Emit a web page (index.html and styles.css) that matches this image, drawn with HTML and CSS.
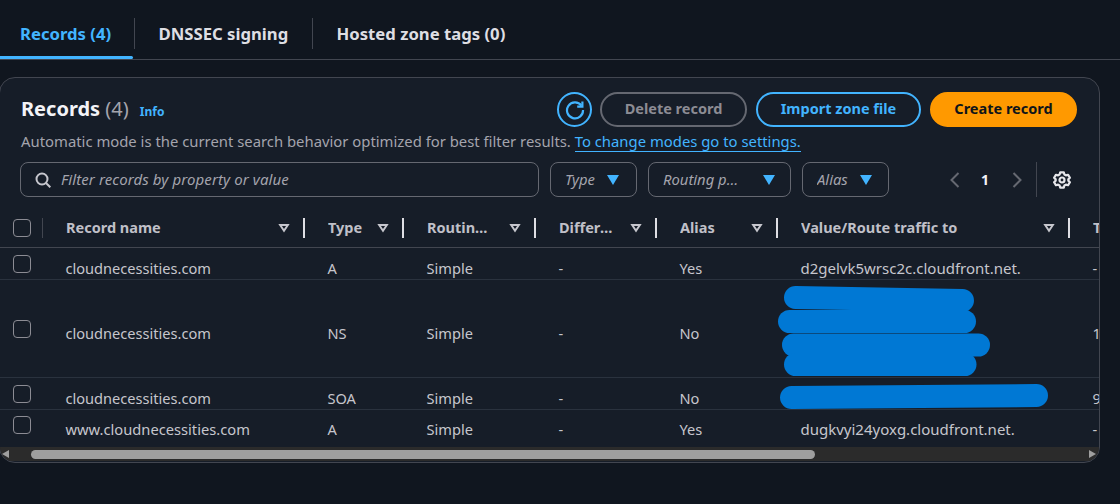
FILE: index.html
```html
<!DOCTYPE html>
<html lang="en">
<head>
<meta charset="utf-8">
<title>Records</title>
<link rel="stylesheet" href="styles.css">
</head>
<body>
<nav class="tabs">
  <a class="tab tab-active">Records (4)</a>
  <a class="tab tab-dns">DNSSEC signing</a>
  <a class="tab tab-tags">Hosted zone tags (0)</a>
</nav>
<section class="card">
  <header class="head">
    <div class="title-row">
      <h2 class="title">Records <span class="count">(4)</span></h2>
      <a class="info">Info</a>
      <div class="actions">
        <button class="btn btn-icon" aria-label="Refresh">
          <svg width="20" height="20" viewBox="0 0 20 20" fill="none" stroke="currentColor" stroke-width="2.2"><path d="M16.4 5.6A8 8 0 1 0 18 10"/><path d="M17.4 1.4v5.2h-5.2"/></svg>
        </button>
        <button class="btn btn-disabled">Delete record</button>
        <button class="btn btn-normal">Import zone file</button>
        <button class="btn btn-primary">Create record</button>
      </div>
    </div>
    <p class="desc">Automatic mode is the current search behavior optimized for best filter results. <a class="link">To change modes go to settings.</a></p>
    <div class="filters">
      <div class="search">
        <svg width="16" height="16" viewBox="0 0 16 16" fill="none" stroke="currentColor" stroke-width="2"><circle cx="7" cy="7" r="5.5"/><path d="m11 11 4.3 4.3"/></svg>
        <span>Filter records by property or value</span>
      </div>
      <div class="select sel-type"><span class="sel-label">Type</span><i class="caret"></i></div>
      <div class="select sel-routing"><span class="sel-label">Routing policy</span><i class="caret"></i></div>
      <div class="select sel-alias"><span class="sel-label">Alias</span><i class="caret"></i></div>
      <div class="pager">
        <svg class="chev chev-prev" width="10" height="16" viewBox="0 0 10 16" fill="none" stroke="currentColor" stroke-width="2"><path d="M8.5 1 1.5 8l7 7"/></svg>
        <span class="page">1</span>
        <svg class="chev chev-next" width="10" height="16" viewBox="0 0 10 16" fill="none" stroke="currentColor" stroke-width="2"><path d="m1.5 1 7 7-7 7"/></svg>
        <span class="pager-sep"></span>
        <svg class="gear" width="18" height="18" viewBox="0 0 18 18" fill="none" stroke="currentColor" stroke-width="2.2" stroke-linejoin="round"><circle cx="9" cy="9" r="2.5"/><path d="M7.2 1.4h3.6l.6 2.1 1.5.9 2.2-.6 1.8 3-1.6 1.6v1.2l1.6 1.6-1.8 3-2.2-.6-1.5.9-.6 2.1H7.2l-.6-2.1-1.5-.9-2.2.6-1.8-3 1.6-1.6V8.4L1.1 6.8l1.8-3 2.2.6 1.5-.9z"/></svg>
      </div>
    </div>
  </header>
  <div class="table">
    <div class="row row-head">
      <div class="th th-check"><i class="check"></i></div>
      <div class="th"><span class="th-label">Record name</span><i class="sort"></i></div>
      <div class="th"><span class="th-label">Type</span><i class="sort"></i></div>
      <div class="th"><span class="th-label">Routing policy</span><i class="sort"></i></div>
      <div class="th"><span class="th-label">Differentiator</span><i class="sort"></i></div>
      <div class="th"><span class="th-label">Alias</span><i class="sort"></i></div>
      <div class="th"><span class="th-label">Value/Route traffic to</span><i class="sort"></i></div>
      <div class="th"><span class="th-label">TTL (seconds)</span></div>
    </div>
    <div class="row">
      <div class="td-check"><i class="check"></i></div>
      <div class="td">cloudnecessities.com</div><div class="td">A</div><div class="td">Simple</div><div class="td">-</div><div class="td">Yes</div><div class="td td-value">d2gelvk5wrsc2c.cloudfront.net.</div><div class="td">-</div>
    </div>
    <div class="row row-tall">
      <div class="td-check"><i class="check"></i></div>
      <div class="td">cloudnecessities.com</div><div class="td">NS</div><div class="td">Simple</div><div class="td">-</div><div class="td">No</div><div class="td"></div><div class="td">172800</div>
    </div>
    <div class="row">
      <div class="td-check"><i class="check"></i></div>
      <div class="td">cloudnecessities.com</div><div class="td">SOA</div><div class="td">Simple</div><div class="td">-</div><div class="td">No</div><div class="td"></div><div class="td">900</div>
    </div>
    <div class="row row-last">
      <div class="td-check"><i class="check"></i></div>
      <div class="td td-www">www.cloudnecessities.com</div><div class="td">A</div><div class="td">Simple</div><div class="td">-</div><div class="td">Yes</div><div class="td td-value">dugkvyi24yoxg.cloudfront.net.</div><div class="td">-</div>
    </div>
  </div>
  <div class="scrollbar">
    <i class="arrow arrow-left"></i>
    <div class="thumb"></div>
    <i class="arrow arrow-right"></i>
  </div>
</section>
<svg class="redact" width="1120" height="504" viewBox="0 0 1120 504" fill="none" stroke="#0078d4" stroke-width="23" stroke-linecap="round">
  <path d="M795.5 297.5 962.5 300.5"/>
  <path d="M789.5 321.5H964.5"/>
  <path d="M793.5 345H978.5"/>
  <path d="M795.5 364.5H965"/>
  <path d="M791.5 397.5 1036.5 395.5"/>
</svg>
</body>
</html>
```
FILE: styles.css
```css
* { box-sizing: border-box; }
html, body { margin: 0; padding: 0; }
body {
  position: relative;
  width: 1120px;
  height: 504px;
  overflow: hidden;
  background: #10161f;
  color: #c6c6cd;
  font-family: "Noto Sans", "Open Sans", sans-serif;
  font-size: 14px;
}
.tabs {
  display: flex;
  height: 60px;
  padding-top: 18px;
  border-bottom: 1px solid #424650;
}
.tab {
  position: relative;
  height: 31px;
  line-height: 31px;
  font-size: 16.7px;
  font-weight: 700;
  color: #dedee3;
  border-right: 1px solid #424650;
  padding-left: 24px;
}
.tab-active { width: 135px; padding-left: 20px; color: #42b4ff; }
.tab-active::after {
  content: "";
  position: absolute;
  left: 0;
  right: 1px;
  top: 38px;
  height: 3px;
  background: #42b4ff;
  border-radius: 0 2px 2px 0;
}
.tab-dns { width: 178px; padding-left: 23.5px; }
.tab-tags { border-right: 0; padding-left: 23.5px; }

.card {
  margin: 17px 0 0 -1px;
  width: 1101px;
  height: 386px;
  background: #161d28;
  border: 1px solid #424650;
  border-radius: 16px;
  overflow: hidden;
}
.head { padding: 14px 22px 0 21px; }
.title-row { display: flex; align-items: center; height: 35px; }
.title { margin: 0 0 2px; font-size: 20px; line-height: 33px; font-weight: 700; color: #f3f3f7; }
.count { font-weight: 400; color: #a4a4ad; }
.info { margin-left: 11px; padding-top: 4px; font-size: 12px; font-weight: 700; color: #42b4ff; }
.actions { display: flex; margin-left: auto; gap: 9px; }
.btn {
  height: 35px;
  border-radius: 18px;
  border: 2px solid #42b4ff;
  background: transparent;
  color: #42b4ff;
  font: 700 14.5px "Noto Sans", "Open Sans", sans-serif;
  padding: 0 0 4px;
}
.btn-icon { width: 35px; margin-right: -1px; padding: 0; display: flex; align-items: center; justify-content: center; }
.btn-disabled { width: 147px; border-color: #656871; color: #8c8c94; }
.btn-normal { width: 165px; }
.btn-primary { width: 147px; background: #ff9900; border-color: #ff9900; color: #0f141a; }
.desc { margin: 4px 0 0; line-height: 20px; font-size: 14.85px; color: #a4a4ad; white-space: nowrap; }
.link { color: #42b4ff; border-bottom: 1px solid #42b4ff; }
.filters { display: flex; align-items: stretch; height: 35px; margin-top: 11px; }
.search {
  display: flex;
  align-items: center;
  gap: 10px;
  width: 519px;
  margin-left: -1px;
  padding-left: 14px;
  border: 1px solid #656871;
  border-radius: 8px;
  color: #c6c6cd;
}
.search span { padding-bottom: 2px; font-style: italic; font-size: 15px; letter-spacing: 0.1px; color: #a4a4ad; }
.select {
  display: flex;
  align-items: center;
  margin-left: 11px;
  padding-left: 14px;
  border: 1px solid #656871;
  border-radius: 8px;
  font-style: italic;
  font-size: 14.8px;
  color: #a4a4ad;
}
.sel-label { padding-bottom: 2px; white-space: nowrap; overflow: hidden; text-overflow: ellipsis; }
.sel-type { width: 87px; margin-left: 11px; }
.sel-routing { width: 143px; }
.sel-alias { width: 87px; }
.sel-routing .sel-label { width: 82px; }
.caret {
  flex: none;
  margin-left: 12px;
  width: 0;
  height: 0;
  border-left: 6px solid transparent;
  border-right: 6px solid transparent;
  border-top: 10px solid #42b4ff;
}
.sel-routing .caret { margin-left: 18px; }
.pager { display: flex; align-items: center; margin-left: auto; width: 137px; color: #656871; }
.chev { flex: none; }
.chev-prev { margin-left: 10px; }
.chev-next { margin-left: 2px; }
.page { width: 50px; text-align: center; font-weight: 700; color: #f3f3f7; }
.pager-sep { width: 1px; height: 35px; background: #424650; margin-left: 14px; }
.gear { color: #e6e6ea; margin-left: 16px; }

.table { height: 238px; margin-top: 12px; overflow: hidden; }
.row {
  display: grid;
  grid-template-columns: 43px 262px 99px 132px 121px 121px 292px 200px;
  height: 32px;
  border-bottom: 1px solid #2a323e;
  align-items: center;
}
.row-head { height: 39px; border-bottom-color: #424650; }
.row-tall { height: 98px; }
.row-last { height: 37px; border-bottom: 0; align-items: start; }
.th {
  display: flex;
  align-items: center;
  height: 20px;
  padding: 0 13px 0 23px;
  border-right: 2px solid #dedee3;
  font-size: 14.5px;
  line-height: 18px;
  font-weight: 700;
  color: #c0c0c8;
  min-width: 0;
}
.th:last-child { border-right: 0; }
.th-check { padding: 0; border-right: 1px solid #424650; }
.th-label { flex: 1; min-width: 0; margin-right: 14px; padding-bottom: 2px; white-space: nowrap; overflow: hidden; text-overflow: ellipsis; }
.sort {
  flex: none;
  width: 12px;
  height: 9px;
  background: #c6c6cd;
  clip-path: polygon(0 0, 100% 0, 50% 100%, 0 0, 33% 28%, 50% 62%, 67% 28%, 33% 28%, 0 0);
}
.check {
  display: block;
  width: 18px;
  height: 18px;
  margin-left: 13px;
  border: 1px solid #8c8c94;
  border-radius: 4px;
}
.td { padding: 9px 0 0 22.5px; font-size: 14.6px; white-space: nowrap; color: #c6c6cd; min-width: 0; }
.td-value { font-size: 15px; }
.td-www { font-size: 14.7px; }
.row-last .td { padding-top: 9px; }
.td-check { min-width: 0; }
.row-last .td-check { padding-top: 6px; }

.scrollbar {
  position: relative;
  height: 14px;
  background: #2b2b2b;
}
.thumb {
  position: absolute;
  left: 31px;
  top: 3px;
  width: 784px;
  height: 9px;
  border-radius: 5px;
  background: #9f9f9f;
}
.arrow { position: absolute; top: 3px; width: 0; height: 0; border-top: 4.5px solid transparent; border-bottom: 4.5px solid transparent; }
.arrow-left { left: 2px; border-right: 7px solid #9f9f9f; }
.arrow-right { right: 3px; border-left: 7px solid #9f9f9f; }
.redact { position: absolute; left: 0; top: 0; pointer-events: none; }
```
